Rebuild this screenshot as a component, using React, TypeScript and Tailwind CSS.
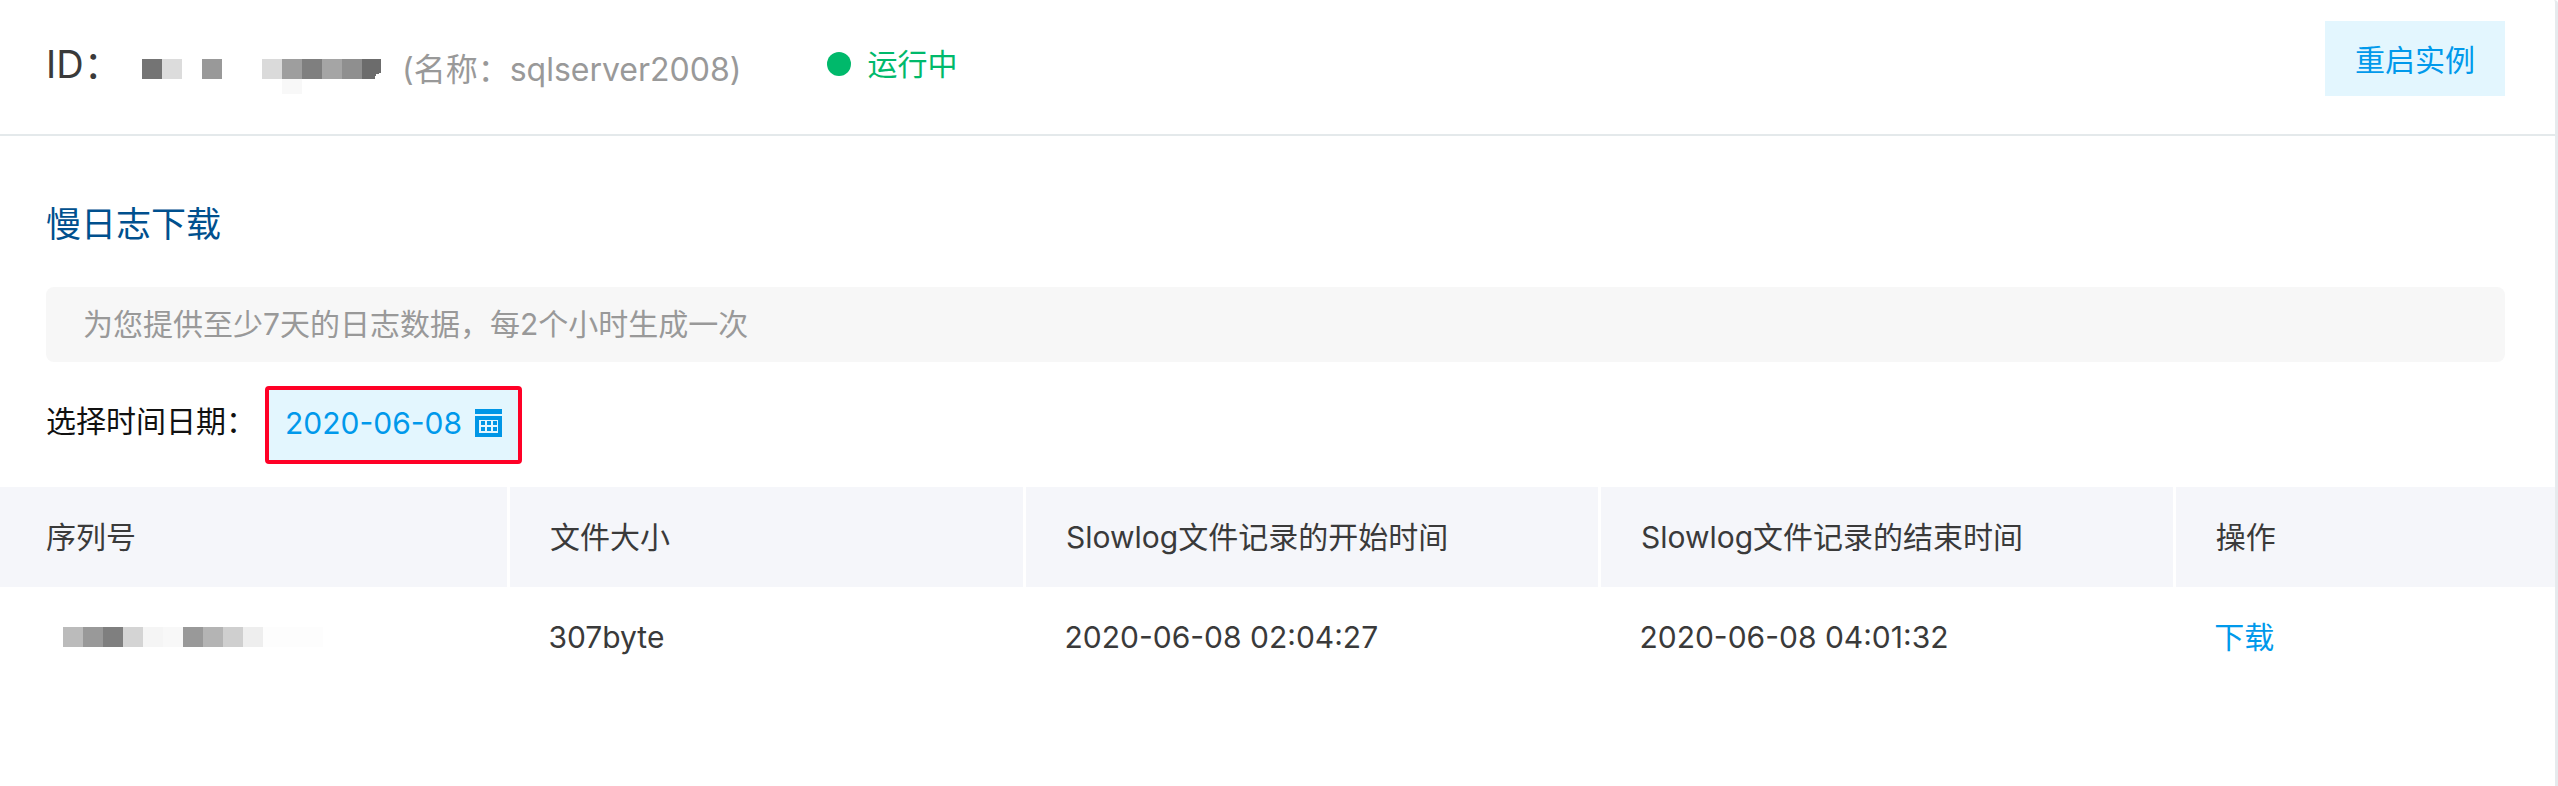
import React from 'react';

interface LogFile {
  id: number;
  size: string;
  start: string;
  end: string;
}

const logs: LogFile[] = [
  { id: 1, size: '307byte', start: '2020-06-08 02:04:27', end: '2020-06-08 04:01:32' },
];

const headers = ['序列号', '文件大小', 'Slowlog文件记录的开始时间', 'Slowlog文件记录的结束时间', '操作'];

// Masked values, one colour per 20px block (null leaves a gap)
const instanceMask = ['#747474', '#dcdcdc', null, '#999999', null, null, '#dadada', '#9e9e9e', '#7f7f7f', '#a5a5a5', '#8f8f8f'];
const serialMask = ['#bbbbbb', '#999999', '#7f7f7f', '#d4d4d4', '#f5f5f5', '#f8f8f8', '#999999', '#b4b4b4', '#cfcfcf', '#eeeeee', '#fdfdfd', '#fdfdfd', '#fdfdfd'];

const MaskedId: React.FC = () => (
  <svg width="240" height="56" viewBox="0 0 240 56" role="img" aria-label="ID" shapeRendering="crispEdges">
    {instanceMask.map((color, i) => color && <rect key={i} x={i * 20} y="21" width="20" height="20" fill={color} />)}
    <path d="M220 21h19v14l-5 1-1 5h-13z" fill="#6c6c6c" />
    <rect x="140" y="41" width="20" height="15" fill="#f8f8f8" />
  </svg>
);

const MaskedSerial: React.FC = () => (
  <svg width="260" height="20" viewBox="0 0 260 20" role="img" aria-label="序列号" shapeRendering="crispEdges">
    {serialMask.map((color, i) => (
      <rect key={i} x={i * 20} width="20" height="20" fill={color} />
    ))}
  </svg>
);

const CalendarIcon: React.FC = () => (
  <svg width="27" height="28" viewBox="0 0 27 28" aria-hidden="true">
    <path d="M0 0h27v5H0z" fill="#0096e6" />
    <path d="M0 7h27v21H0zM4 11v13h19V11z" fill="#0096e6" fillRule="evenodd" />
    <path d="M6 12h4v4H6zM12 12h4v4h-4zM18 12h4v4h-4zM6 18h4v4H6zM12 18h4v4h-4zM18 18h4v4h-4z" fill="#0096e6" />
  </svg>
);

const App: React.FC = () => {
  return (
    <div className="min-h-screen rounded-tr-sm border-r-3 border-[#e6eaed] bg-white font-['Inter','Noto_Sans_CJK_SC',sans-serif] text-[30px] leading-[44px] text-[#3a3a3a]">
      <header className="flex h-[136px] items-start justify-between border-b-2 border-[#e4e9eb] pr-[50px] pl-[46px]">
        <div className="flex h-[131px] items-center">
          <h1 className="flex items-center">
            <span className="w-24 pb-1 text-[38px] whitespace-nowrap">ID：</span>
            <MaskedId />
            <span className="ml-5 pt-2 text-[32px] text-[#999]">(名称：sqlserver2008)</span>
          </h1>
          <p className="ml-[86px] flex items-center gap-4 pb-1 text-[#00b96b]">
            <span className="size-6 rounded-full bg-[#00b96b]"></span>
            运行中
          </p>
        </div>
        <button type="button" className="mt-[21px] h-[75px] w-[180px] bg-[#e3f6fe] pt-0.5 text-[#0099eb]">
          重启实例
        </button>
      </header>

      <main>
        <section className="pt-16 pr-[50px] pl-[46px]">
          <h2 className="text-[35px] leading-[48px] text-[#00508e]">慢日志下载</h2>
          <p className="mt-[39px] rounded-lg bg-[#f7f7f7] px-[37px] py-4 leading-[43px] text-[#999]">
            为您提供至少7天的日志数据，每2个小时生成一次
          </p>
          <div className="mt-6 flex items-center text-[#111]">
            <span id="date-label" className="w-[219px] pb-2 whitespace-nowrap">选择时间日期：</span>
            <button
              type="button"
              aria-labelledby="date-label date-value"
              className="flex h-[78px] items-center gap-[13px] rounded-sm border-4 border-[#ff0026] bg-[#e3f6fe] px-4 pb-1 text-[#0099eb]"
            >
              <span id="date-value">2020-06-08</span>
              <CalendarIcon />
            </button>
          </div>
        </section>

        <table className="mt-[23px] w-full table-fixed border-collapse text-left">
          <colgroup>
            <col className="w-[19.9%]" />
            <col className="w-[20.2%]" />
            <col className="w-[22.5%]" />
            <col className="w-[22.5%]" />
            <col className="w-[14.9%]" />
          </colgroup>
          <thead>
            <tr className="h-[100px] bg-[#f5f6fa]">
              {headers.map((title) => (
                <th key={title} scope="col" className="border-r-3 border-white pl-10 font-normal first:pl-[46px] last:border-r-0">
                  {title}
                </th>
              ))}
            </tr>
          </thead>
          <tbody>
            {logs.map((log) => (
              <tr key={log.id} className="h-[100px]">
                <td className="pl-[63px]">
                  <MaskedSerial />
                </td>
                <td className="pl-10">{log.size}</td>
                <td className="pl-10">{log.start}</td>
                <td className="pl-10">{log.end}</td>
                <td className="pl-10">
                  <a href="#download" className="text-[#0099eb]">下载</a>
                </td>
              </tr>
            ))}
          </tbody>
        </table>
      </main>
    </div>
  );
};

export default App;
